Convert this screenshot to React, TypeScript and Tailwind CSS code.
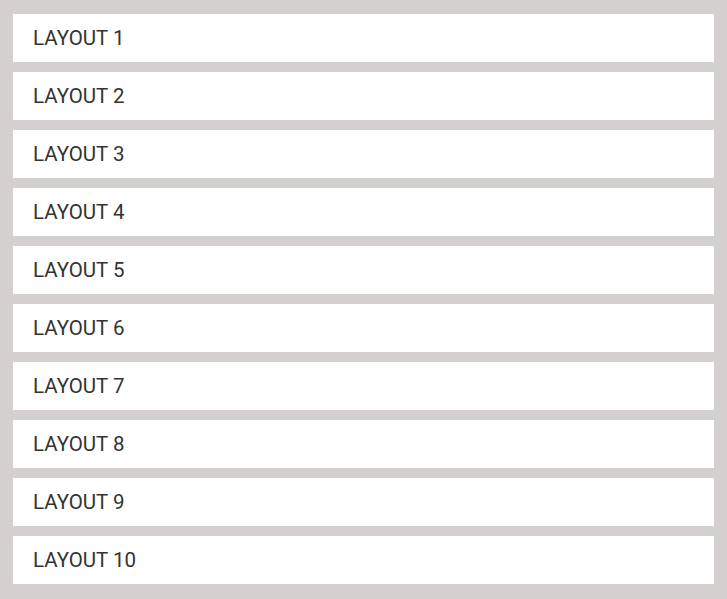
export default function App() {
  const items = Array.from({ length: 10 }, (_, i) => `LAYOUT ${i + 1}`);
  return (
    <div className="min-h-[599px] bg-[#d4d0cf] pt-[14px] pb-[15px] px-[13px] flex flex-col gap-[10px]" style={{ fontFamily: "Roboto, sans-serif" }}>
      {items.map((t) => (
        <div key={t} className="h-[48px] bg-white flex items-center pl-[20px] text-[20.5px] text-[#333333]">
          {t}
        </div>
      ))}
    </div>
  );
}
